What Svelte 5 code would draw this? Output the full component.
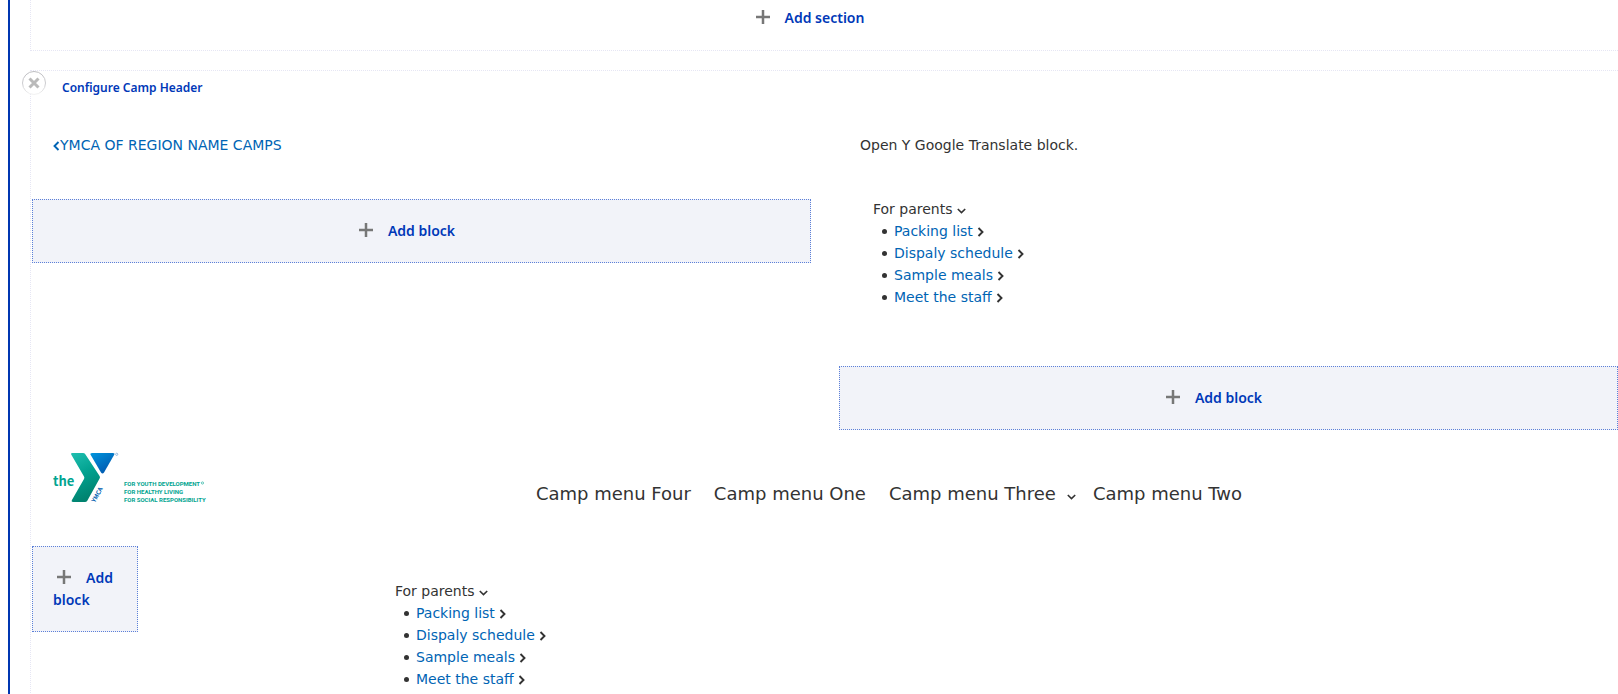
<script>
  const parentLinks = ['Packing list', 'Dispaly schedule', 'Sample meals', 'Meet the staff'];
  const menu = [
    { label: 'Camp menu Four' },
    { label: 'Camp menu One' },
    { label: 'Camp menu Three', expands: true },
    { label: 'Camp menu Two' }
  ];
</script>

{#snippet plus()}
  <svg class="plus" viewBox="0 0 14 14" aria-hidden="true"><path d="M7 0v14M0 7h14" /></svg>
{/snippet}

{#snippet down()}
  <svg class="down" viewBox="0 0 9 6" aria-hidden="true"><path d="M.8 1 4.500 4.600 8.200 1" /></svg>
{/snippet}

{#snippet addBlock()}
  <div class="add-block"><a class="add" href="#add-block">{@render plus()}Add block</a></div>
{/snippet}

{#snippet parents()}
  <div class="parents">
    <span>For parents {@render down()}</span>
    <ul>
      {#each parentLinks as link}
        <li><a href="#parents">{link}</a> <svg class="right" viewBox="0 0 7 10" aria-hidden="true"><path d="M1.500 1 5.500 5l-4 4" /></svg></li>
      {/each}
    </ul>
  </div>
{/snippet}

<main>
  <section class="region first">
    <a class="add" href="#add-section">{@render plus()}Add section</a>
  </section>

  <section class="region">
    <button class="remove" aria-label="Remove Camp Header">
      <svg viewBox="0 0 24 24" aria-hidden="true">
        <defs>
          <linearGradient id="ring" x2="0" y2="1">
            <stop offset="0" stop-color="#bcbcc0" />
            <stop offset="0.6" stop-color="#cfcfd2" />
            <stop offset="1" stop-color="#f2f2f2" />
          </linearGradient>
        </defs>
        <circle cx="12" cy="12" r="11.5" fill="#fff" stroke="url(#ring)" />
        <path d="m7.500 7.500 9 9m0-9-9 9" stroke="#bababa" stroke-width="3" />
      </svg>
    </button>
    <a class="configure" href="#configure">Configure Camp Header</a>

    <div class="columns">
      <div>
        <p class="block"><a href="#camps"><svg class="right" viewBox="0 0 7 10" aria-hidden="true"><path d="M5.500 1 1.500 5l4 4" /></svg>YMCA OF REGION NAME CAMPS</a></p>
        {@render addBlock()}
      </div>
      <div>
        <p class="block">Open Y Google Translate block.</p>
        {@render parents()}
        {@render addBlock()}
      </div>
    </div>

    <div class="header-row">
      <div class="side">
        <a class="logo" href="#home" aria-label="the Y">
          <svg viewBox="0 0 160 52" aria-hidden="true">
            <defs>
              <linearGradient id="green" x1="0" y1="0" x2="0.3" y2="1">
                <stop offset="0" stop-color="#20bfb0" />
                <stop offset="0.5" stop-color="#01a18f" />
                <stop offset="1" stop-color="#00826f" />
              </linearGradient>
              <linearGradient id="blue" x1="0" y1="0" x2="0.7" y2="1">
                <stop offset="0" stop-color="#0095dd" />
                <stop offset="1" stop-color="#0056ae" />
              </linearGradient>
            </defs>
            <path fill="url(#green)" d="M19 1h11q1.500 0 2.300 1.200L46.600 24q.8 1.300 0 2.600L34.300 48.800Q33.500 50 32 50H20q-2 0-1.200-1.700L31 27q.7-1.300 0-2.600L18.200 2.600Q17.500 1 19 1Z" />
            <path fill="url(#blue)" d="M39 1h21q2.200 0 1.200 1.800L51 20.600q-1.500 2-3 0L37.600 2.800Q36.800 1 39 1Z" />
            <circle cx="63.700" cy="2.300" r="1.100" fill="none" stroke="#5a94cc" stroke-width=".6" />
            <text class="the" x="0" y="34">the</text>
            <text class="ymca" transform="translate(42 51) rotate(-61)">YMCA</text>
            <text class="tag" x="71" y="34">FOR YOUTH DEVELOPMENT</text>
            <text class="tag" x="71" y="42">FOR HEALTHY LIVING</text>
            <text class="tag" x="71" y="50">FOR SOCIAL RESPONSIBILITY</text>
            <circle cx="149.500" cy="31" r="1.100" fill="none" stroke="#01a490" stroke-width=".6" />
          </svg>
        </a>
        {@render addBlock()}
      </div>
      <div class="content">
        <nav>
          {#each menu as item}
            <a href="#menu">{item.label}{#if item.expands}{@render down()}{/if}</a>
          {/each}
        </nav>
        {@render parents()}
      </div>
    </div>
  </section>
</main>

<style>
  :global(body) {
    margin: 0;
    background: #fff;
  }
  main {
    box-sizing: border-box;
    min-height: 100vh;
    margin-left: 8px;
    padding-left: 20px;
    border-left: 2px solid #0036b1;
    color: #333;
    font: 14px/22px "DejaVu Sans", sans-serif;
    overflow: hidden;
  }
  a {
    color: #0064b4;
    text-decoration: none;
  }
  svg {
    fill: none;
  }
  .region {
    position: relative;
    border: 1px dotted #e6e6f4;
    border-right: 0;
    padding: 0 0 24px 1px;
  }
  .first {
    border-top: 0;
    margin-bottom: 19px;
    padding: 7px 0 21px;
    text-align: center;
  }
  .first,
  .add-block,
  .configure {
    font-family: "Noto Sans", sans-serif;
    font-weight: 600;
  }
  .add,
  .configure {
    color: #0038b8;
  }
  .add {
    padding: 0 33px;
  }
  .plus {
    width: 14px;
    height: 14px;
    margin: 0 15px 0 -29px;
    vertical-align: -1px;
    stroke: #777;
    stroke-width: 2.5;
  }
  .remove {
    position: absolute;
    top: 0;
    left: -9px;
    width: 24px;
    height: 24px;
    padding: 0;
    border: 0;
    background: none;
  }
  .remove svg {
    display: block;
  }
  .configure {
    display: block;
    width: max-content;
    margin: 6px 0 0 30px;
    font-size: 12px;
  }
  .columns {
    display: grid;
    grid-template-columns: 1fr 1fr;
    gap: 28px;
    margin-top: 14px;
  }
  .block {
    margin: 0;
    padding: 21px 21px 43px;
  }
  .add-block {
    padding: 20px;
    border: 1px dotted #5c80d8;
    background: #f2f3f9;
    text-align: center;
  }
  .down {
    width: 9px;
    height: 6px;
    stroke: currentColor;
    stroke-width: 1.6;
  }
  .right {
    width: 7px;
    height: 10px;
    stroke: currentColor;
    stroke-width: 1.9;
    vertical-align: -1px;
  }
  .parents {
    padding-left: 34px;
    margin: -1px 0 58px;
  }
  ul {
    margin: 0;
    padding-left: 21px;
  }
  li {
    list-style: none;
    position: relative;
  }
  li::before {
    content: "";
    position: absolute;
    left: -12px;
    top: 9px;
    width: 5px;
    height: 5px;
    border-radius: 50%;
    background: #333;
  }
  .header-row {
    display: grid;
    grid-template-columns: 106px minmax(0, 1fr);
    gap: 22px;
    margin-top: 22px;
  }
  .side .add-block {
    text-align: left;
  }
  .side .add {
    padding-right: 0;
  }
  .logo {
    display: block;
    margin: 0 0 42px 21px;
  }
  .logo svg {
    display: block;
    width: 160px;
    height: 52px;
  }
  .logo text {
    font-family: "Noto Sans CJK SC", sans-serif;
    font-weight: 700;
    fill: #01a490;
  }
  .logo .the {
    font-size: 13px;
  }
  .logo .ymca {
    font-size: 6px;
    fill: #0060af;
  }
  .logo .tag {
    font-family: Roboto, sans-serif;
    font-size: 6px;
  }
  nav {
    display: flex;
    justify-content: center;
    gap: 23px;
    padding: 28px 0 73px;
    font-size: 18px;
    line-height: 28px;
  }
  nav a {
    color: #333;
  }
  nav .down {
    margin-left: 11px;
    margin-right: -6px;
  }
  .content .parents {
    padding-left: 235px;
    margin-bottom: 0;
  }
</style>
